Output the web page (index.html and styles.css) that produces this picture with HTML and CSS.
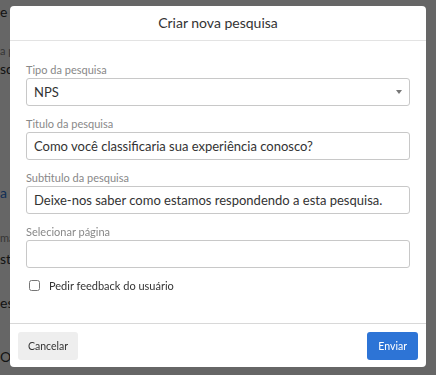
FILE: index.html
```html
<!DOCTYPE html>
<html lang="pt">

<head>
    <meta charset="UTF-8" />
    <title>Criar nova pesquisa</title>
    <link rel="stylesheet" href="styles.css">
</head>

<body>
    <div class="page">
        <p class="bg-title">e r</p>
        <p class="bg-small bg-p2">a p</p>
        <p class="bg-text">squ</p>
        <p class="bg-link">a p</p>
        <p class="bg-small bg-ma">ma</p>
        <p class="bg-text bg-sta">sta</p>
        <p class="bg-text bg-es">es</p>
        <p class="bg-text bg-o">O</p>
    </div>

    <div class="overlay">
        <div class="modal">
            <div class="modal-header">Criar nova pesquisa</div>

            <div class="modal-body">
                <label class="field">
                    <span>Tipo da pesquisa</span>
                    <div class="select">NPS <i class="caret"></i></div>
                </label>
                <label class="field">
                    <span>Titulo da pesquisa</span>
                    <input type="text" value="Como você classificaria sua experiência conosco?">
                </label>
                <label class="field">
                    <span>Subtitulo da pesquisa</span>
                    <input type="text" value="Deixe-nos saber como estamos respondendo a esta pesquisa.">
                </label>
                <label class="field">
                    <span>Selecionar página</span>
                    <input type="text" value="">
                </label>
                <label class="check">
                    <input type="checkbox"> Pedir feedback do usuário
                </label>
            </div>

            <div class="modal-footer">
                <button class="btn">Cancelar</button>
                <button class="btn primary">Enviar</button>
            </div>
        </div>
    </div>
</body>

</html>
```

FILE: styles.css
```css
* {
    box-sizing: border-box
}

body {
    margin: 0;
    font-family: "Lato", "Liberation Sans", sans-serif;
    background: #fff;
    color: #333;
    height: 375px;
    overflow: hidden
}

/* page behind the modal, only its left edge shows */
.page {
    padding-top: 3px;
    width: 10px;
    overflow: hidden
}

.page p {
    margin: 0;
    white-space: nowrap;
    line-height: 18px;
    font-size: 14px
}

.bg-small {
    font-size: 11px !important;
    color: #888
}

.bg-p2 {
    margin-top: 21px !important
}

.bg-link {
    color: #2d74d6;
    margin-top: 106px !important
}

.bg-ma {
    margin-top: 27px !important
}

.bg-sta {
    margin-top: 3px !important
}

.bg-es {
    margin-top: 26px !important
}

.bg-o {
    margin-top: 36px !important;
    font-size: 15px
}

.overlay {
    position: fixed;
    inset: 0;
    background: rgba(0, 0, 0, .6);
    padding: 6px 10px 8px
}

.modal {
    background: #fff;
    border-radius: 4px;
    height: 361px;
    display: flex;
    flex-direction: column
}

.modal-header {
    height: 35px;
    border-bottom: 1px solid #e3e3e3;
    text-align: center;
    font-size: 14px;
    line-height: 33px;
    color: #333
}

.modal-body {
    flex: 1;
    padding: 22px 16px 0;
    border-bottom: 1px solid #d8d8d8
}

.field {
    display: block;
    margin-bottom: 11px
}

.field span {
    display: block;
    font-size: 11px;
    line-height: 14px;
    color: #888;
    margin-bottom: 1px
}

.select,
.field input {
    display: flex;
    align-items: center;
    width: 100%;
    height: 28px;
    border: 1px solid #c8c8c8;
    border-radius: 3px;
    padding: 0 7px;
    font-family: inherit;
    font-size: 13px;
    color: #333;
    background: #fff;
    outline: none
}

.select {
    justify-content: space-between
}

.caret {
    width: 0;
    height: 0;
    border-left: 3px solid transparent;
    border-right: 3px solid transparent;
    border-top: 4px solid #777
}

.check {
    display: flex;
    align-items: center;
    gap: 9px;
    font-size: 11px;
    color: #333;
    padding-left: 3px;
    margin-top: 7px
}

.check input {
    margin: 0;
    width: 11px;
    height: 11px
}

.modal-footer {
    display: flex;
    justify-content: space-between;
    padding: 8px 8px 7px
}

.btn {
    height: 28px;
    border: none;
    border-radius: 3px;
    padding: 0 10px;
    font-family: inherit;
    font-size: 10.5px;
    background: #eee;
    color: #333
}

.btn.primary {
    background: #2d74d6;
    color: #fff;
    padding: 0 11px
}
```
